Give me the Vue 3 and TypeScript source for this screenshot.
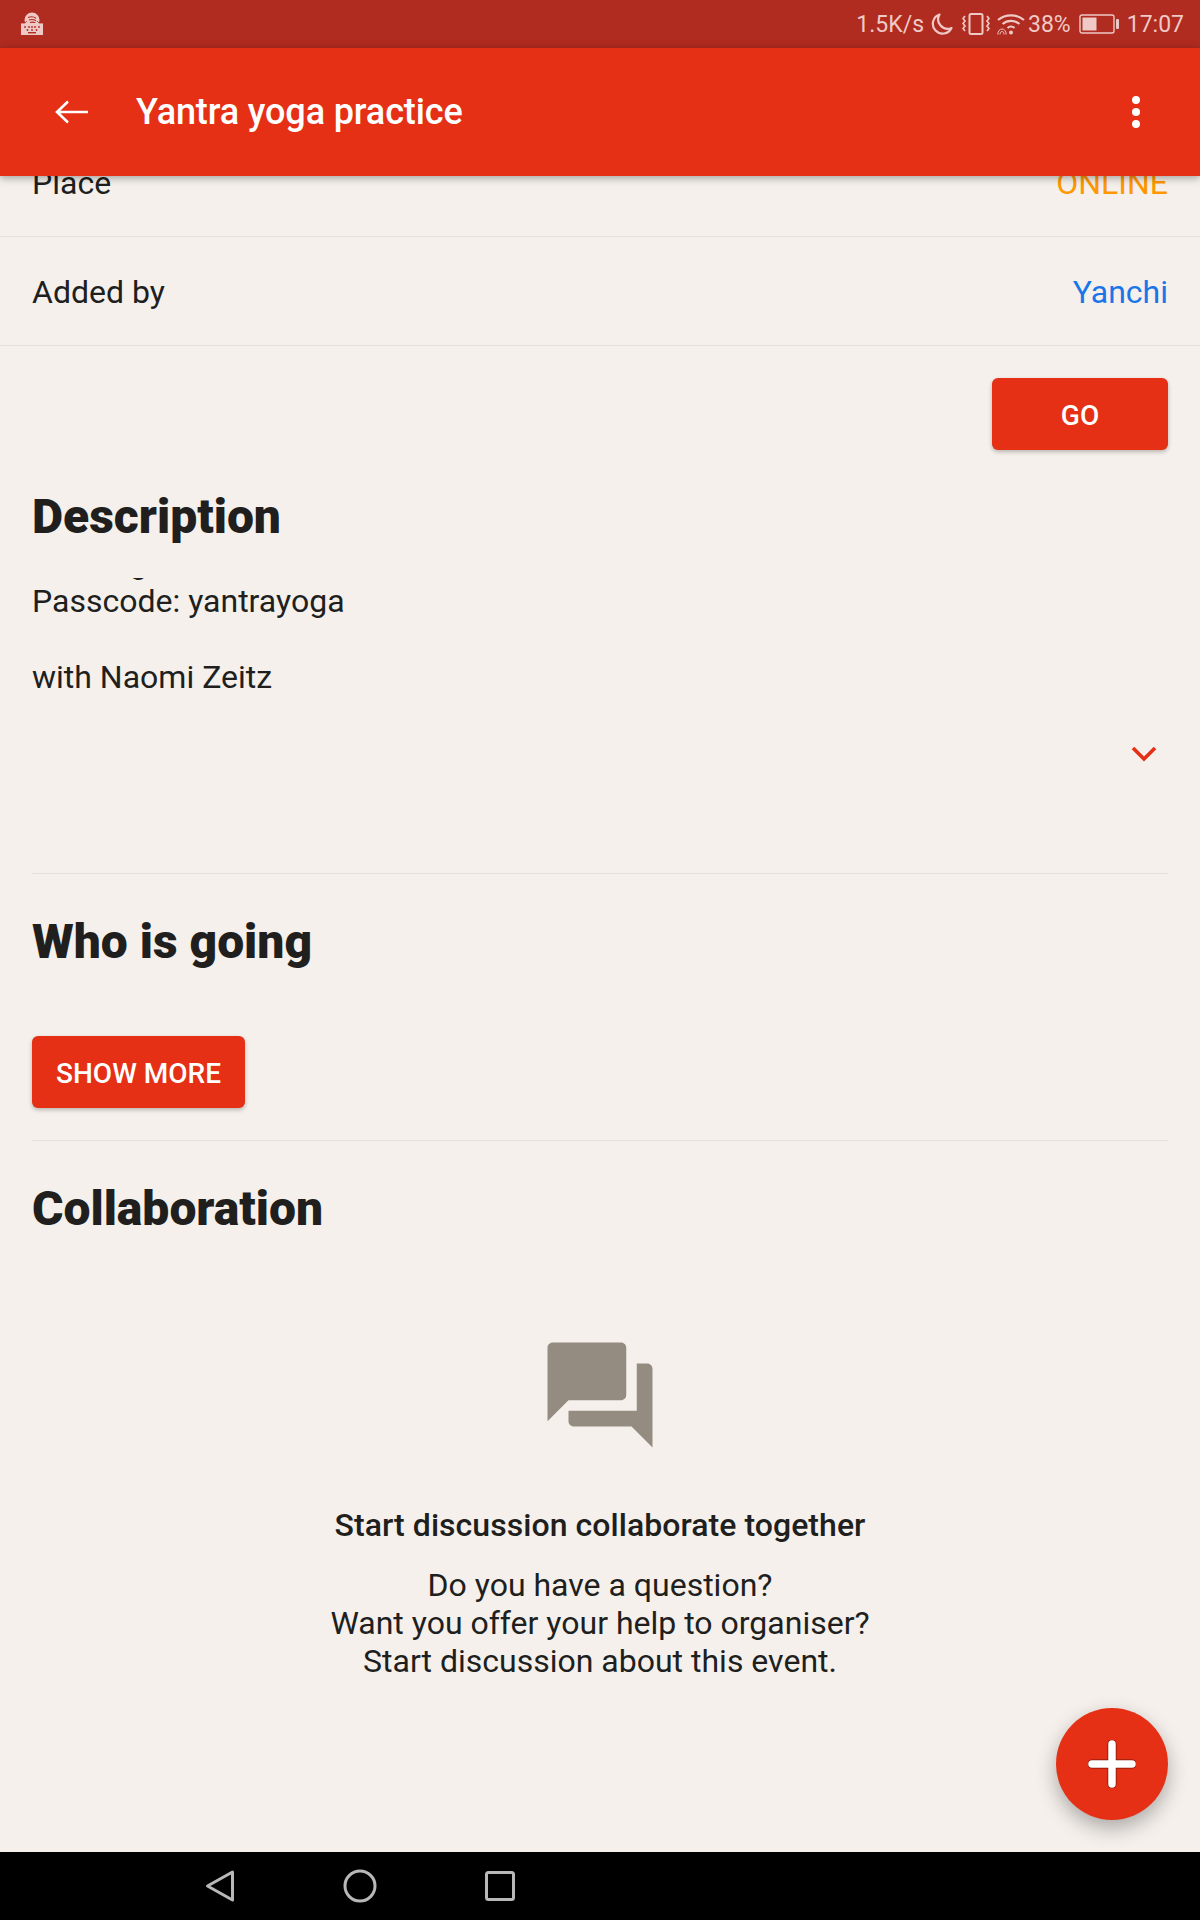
<script setup lang="ts">
const helpLines: string[] = [
  'Do you have a question?',
  'Want you offer your help to organiser?',
  'Start discussion about this event.',
]
</script>

<template>
  <div class="screen">
    <header class="status">
      <svg class="kbd" viewBox="0 0 24 24" width="24" height="24">
        <circle cx="12" cy="8" r="7.500" fill="#eec9c5" />
        <path d="M8 5.500c3-1.200 6-.8 8 .8M9 8c2.500-.8 5-.5 7 .8M10 10.500c2-.6 4-.3 5.500.6" fill="none" stroke="#b02b20" stroke-width="1.100" />
        <rect x="1" y="11" width="22" height="12" fill="#eec9c5" />
        <path d="M1 11h4l2-2M23 11h-4l-2-2" stroke="#b02b20" stroke-width=".8" fill="none" />
        <g fill="#b02b20">
          <circle cx="5" cy="15" r=".9" /><circle cx="9" cy="15" r=".9" /><circle cx="12" cy="15" r=".9" /><circle cx="15" cy="15" r=".9" /><circle cx="19" cy="15" r=".9" />
          <circle cx="7.500" cy="18" r=".9" /><circle cx="12" cy="18" r=".9" /><circle cx="16.500" cy="18" r=".9" />
          <rect x="8" y="20" width="8" height="1.400" />
        </g>
      </svg>
      <div class="status-right">
        <span class="speed">1.5K/s</span>
        <svg class="st-moon" viewBox="0 0 22 22" width="22" height="22">
          <path d="M8.500 1.500a9.800 9.800 0 1 0 12 13.500 9.500 9.500 0 0 1-12-13.500z" fill="none" stroke="#eec9c5" stroke-width="2.200" stroke-linejoin="round" />
        </svg>
        <svg class="st-vib" viewBox="0 0 28 22" width="28" height="22">
          <rect x="7.500" y="1" width="13" height="20" rx="1.500" fill="none" stroke="#eec9c5" stroke-width="2" />
          <path d="M3 3 1 5.500 3 8 1 10.500 3 13 1 15.500 3 18M25 3l2 2.500L25 8l2 2.500L25 13l2 2.500L25 18" fill="none" stroke="#eec9c5" stroke-width="1.700" />
        </svg>
        <svg class="st-wifi" viewBox="0 0 28 22" width="28" height="22">
          <path d="M1 7C8.500.8 19.500.8 27 7M5.500 11C10.500 6.800 17.500 6.800 22.500 11M10.500 15c2-1.800 5-1.800 7 0" fill="none" stroke="#eec9c5" stroke-width="2.200" />
          <circle cx="14" cy="19.500" r="2" fill="#eec9c5" />
          <path d="M.8 21.500c0-3.500 2-5.500 4.200-5.500s4.200 2 4.200 5.500M3 21.500c0-2 .8-3 2-3s2 1 2 3" fill="none" stroke="#eec9c5" stroke-width="1" />
        </svg>
        <span class="pct">38%</span>
        <svg class="st-batt" viewBox="0 0 40 20" width="40" height="20">
          <rect x="1" y="1" width="34" height="18" rx="2" fill="none" stroke="#eec9c5" stroke-width="1.400" />
          <rect x="3.500" y="3.500" width="14" height="13" fill="#eec9c5" />
          <rect x="37" y="5" width="3" height="10" rx="1" fill="#eec9c5" />
        </svg>
        <span class="clock">17:07</span>
      </div>
    </header>

    <div class="appbar">
      <svg class="back" viewBox="0 0 34 24" width="34" height="24">
        <path d="M2 12h31M13 1.500 2 12l11 10.500" fill="none" stroke="#fff" stroke-width="2.600" />
      </svg>
      <h1 class="title">Yantra yoga practice</h1>
      <div class="dots"><i></i><i></i><i></i></div>
    </div>

    <main class="scroll">
      <div class="content">
        <div class="row">
          <span>Place</span>
          <span class="orange">ONLINE</span>
        </div>
        <div class="row">
          <span>Added by</span>
          <span class="blue">Yanchi</span>
        </div>

        <div class="go-wrap">
          <button class="btn go">GO</button>
        </div>

        <section class="desc section">
          <h2>Description</h2>
          <div class="desc-clip">
            <p class="first">Meeting</p>
            <p>Passcode: yantrayoga</p>
            <p>with Naomi Zeitz</p>
          </div>
          <div class="chev-row">
            <svg viewBox="0 0 26 18" width="26" height="18">
              <path d="M2 3l11 11L24 3" fill="none" stroke="#e53015" stroke-width="3.600" />
            </svg>
          </div>
        </section>

        <section class="who section">
          <h2>Who is going</h2>
          <button class="btn more">SHOW MORE</button>
        </section>

        <section class="collab">
          <h2>Collaboration</h2>
          <div class="empty">
            <svg class="forum" viewBox="0 0 24 24" width="126" height="126">
              <path fill="#948c80" d="M21 6h-2v9H6v2c0 .55.45 1 1 1h11l4 4V7c0-.55-.45-1-1-1zm-4 6V3c0-.55-.45-1-1-1H3c-.55 0-1 .45-1 1v14l4-4h10c.55 0 1-.45 1-1z" />
            </svg>
            <div class="empty-title">Start discussion collaborate together</div>
            <div class="empty-text">
              <div v-for="line in helpLines" :key="line">{{ line }}</div>
            </div>
          </div>
        </section>
      </div>

      <button class="fab" aria-label="Add">
        <svg viewBox="0 0 48 48" width="48" height="48">
          <path d="M24 4v40M4 24h40" stroke="#7a1408" stroke-width="9" stroke-linecap="round" />
          <path d="M24 4v40M4 24h40" stroke="#fff" stroke-width="7.500" stroke-linecap="round" />
        </svg>
      </button>
    </main>

    <nav class="navbar">
      <svg viewBox="0 0 32 34" width="32" height="34">
        <path d="M28.500 3 3.500 17l25 14z" fill="none" stroke="#b8b8b8" stroke-width="3" stroke-linejoin="round" />
      </svg>
      <svg viewBox="0 0 34 34" width="34" height="34">
        <circle cx="17" cy="17" r="15" fill="none" stroke="#b8b8b8" stroke-width="3" />
      </svg>
      <svg viewBox="0 0 32 32" width="32" height="32">
        <rect x="2.500" y="2.500" width="27" height="27" rx="2" fill="none" stroke="#b8b8b8" stroke-width="3" />
      </svg>
    </nav>
  </div>
</template>

<style>
html, body { margin: 0; padding: 0; }
</style>

<style scoped>
.screen {
  width: 1200px;
  height: 1920px;
  display: flex;
  flex-direction: column;
  overflow: hidden;
  background: #f5f0ec;
  font-family: Roboto, "Liberation Sans", sans-serif;
  color: #201f1d;
}
.status {
  height: 48px;
  flex: none;
  background: #b02b20;
  display: flex;
  align-items: center;
  justify-content: space-between;
  padding: 0 16px 0 20px;
  color: #eec9c5;
  font-size: 23px;
}
.status-right { display: flex; align-items: center; }
.speed { margin-right: 7px; }
.st-moon { margin-right: 9px; }
.st-vib { margin-right: 7px; }
.st-wifi { margin-right: 3px; }
.pct { margin-right: 8px; }
.st-batt { margin-right: 8px; }
.appbar {
  position: relative;
  z-index: 2;
  height: 128px;
  flex: none;
  background: #e53015;
  display: flex;
  align-items: center;
  padding: 0 60px 0 55px;
  box-shadow: 0 2px 8px rgba(0, 0, 0, 0.35);
  color: #fff;
}
.title {
  margin: 0 0 0 47px;
  flex: 1;
  font-size: 36px;
  font-weight: 500;
  letter-spacing: -0.12px;
}
.dots { display: flex; flex-direction: column; gap: 4px; }
.dots i { width: 8px; height: 8px; border-radius: 50%; background: #fff; }
.scroll {
  position: relative;
  flex: 1;
  min-height: 0;
  overflow: hidden;
}
.content { margin-top: -48px; }
.row {
  height: 107px;
  border-bottom: 1px solid #e4dfda;
  display: flex;
  align-items: center;
  justify-content: space-between;
  padding: 1px 32px 0;
  font-size: 32px;
}
.orange { color: #ff9800; }
.blue { color: #1a76e8; }
.go-wrap {
  display: flex;
  justify-content: flex-end;
  padding: 32px 32px 0;
}
.btn {
  border: 0;
  border-radius: 6px;
  background: #e53015;
  color: #fff;
  font-family: inherit;
  font-size: 28px;
  font-weight: 500;
  height: 72px;
  box-shadow: 0 2px 4px rgba(0, 0, 0, 0.25);
  display: flex;
  align-items: center;
  justify-content: center;
  padding: 2px 0 0;
}
.go { width: 176px; }
.more { width: 213px; margin-top: 66px; }
h2 {
  margin: 0;
  font-size: 48px;
  font-weight: 900;
  line-height: 56px;
}
.section { margin: 0 32px; border-bottom: 1px solid #e4dfda; }
.desc { padding-top: 39px; height: 424px; box-sizing: border-box; }
.desc-clip {
  margin-top: 33px;
  height: 122px;
  overflow: hidden;
  font-size: 32px;
  line-height: 38px;
}
.desc-clip p { margin: 0 0 38px; }
.desc-clip p.first { margin: -34px 0 0; }
.chev-row {
  display: flex;
  justify-content: flex-end;
  padding-right: 11px;
  margin-top: 45px;
}
.who { padding: 40px 0 32px; }
.collab { padding: 40px 32px 0; }
.empty { text-align: center; }
.forum { display: block; margin: 95px auto 0; }
.empty-title { margin-top: 48px; font-size: 32px; font-weight: 500; line-height: 38px; letter-spacing: 0.05px; }
.empty-text { margin-top: 22px; font-size: 32px; line-height: 38px; }
.fab {
  position: absolute;
  right: 32px;
  bottom: 32px;
  width: 112px;
  height: 112px;
  border: 0;
  padding: 0;
  border-radius: 50%;
  background: #e53015;
  display: flex;
  align-items: center;
  justify-content: center;
  box-shadow: 0 8px 20px rgba(0, 0, 0, 0.3);
}
.navbar {
  height: 68px;
  flex: none;
  background: #000;
  display: flex;
  align-items: center;
  gap: 107px;
  padding-left: 204px;
}
</style>
